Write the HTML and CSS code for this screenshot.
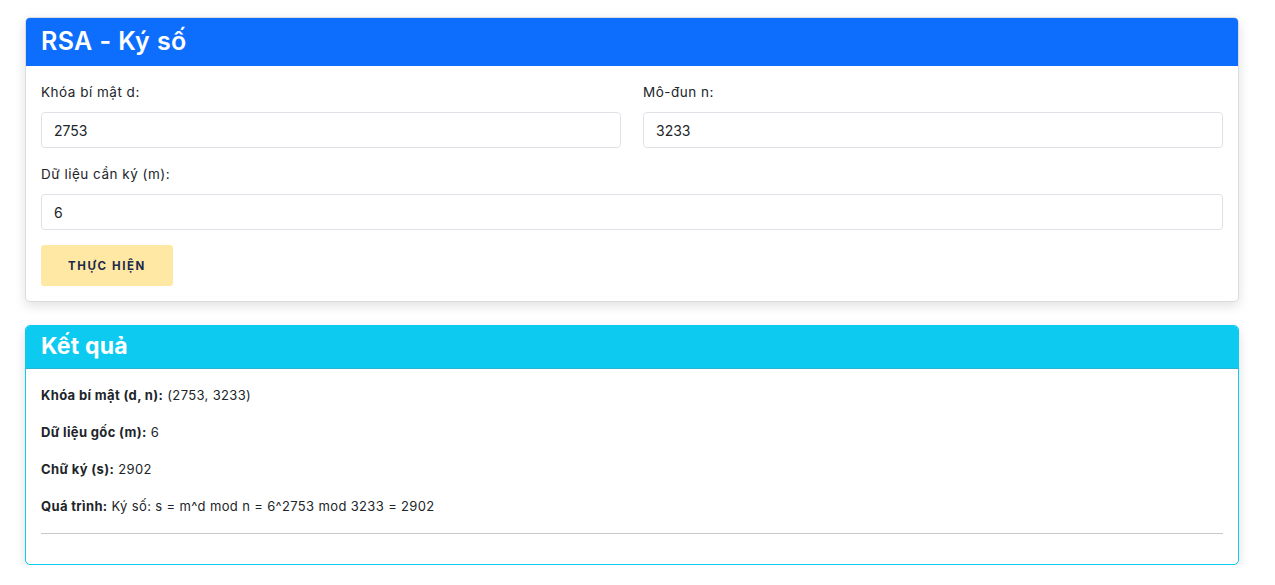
FILE: index.html
```html
<!DOCTYPE html>
<html lang="vi">
<head>
<meta charset="utf-8">
<title>RSA - Ký số</title>
<link rel="stylesheet" href="styles.css">
</head>
<body>
<main class="page">
  <section class="card card-form">
    <header class="card-header header-primary">
      <h1 class="card-title">RSA - Ký số</h1>
    </header>
    <div class="card-body">
      <div class="row">
        <div class="field">
          <label class="label">Khóa bí mật d:</label>
          <div class="input">2753</div>
        </div>
        <div class="field">
          <label class="label">Mô-đun n:</label>
          <div class="input">3233</div>
        </div>
      </div>
      <div class="field field-full">
        <label class="label">Dữ liệu cần ký (m):</label>
        <div class="input">6</div>
      </div>
      <button class="btn">THỰC HIỆN</button>
    </div>
  </section>

  <section class="card card-result">
    <header class="card-header header-info">
      <h2 class="card-title title-bold">Kết quả</h2>
    </header>
    <div class="card-body result-body">
      <p class="line"><strong>Khóa bí mật (d, n):</strong> (2753, 3233)</p>
      <p class="line"><strong>Dữ liệu gốc (m):</strong> 6</p>
      <p class="line"><strong>Chữ ký (s):</strong> 2902</p>
      <p class="line"><strong>Quá trình:</strong> Ký số: s = m^d mod n = 6^2753 mod 3233 = 2902</p>
      <hr class="divider">
    </div>
  </section>
</main>
</body>
</html>
```

FILE: styles.css
```css
* { box-sizing: border-box; }
html, body { margin: 0; padding: 0; background: #ffffff; }
body {
  font-family: "Inter", "Open Sans", "DejaVu Sans", sans-serif;
  color: #212529;
}
.page {
  width: 1214px;
  margin-left: 25px;
  padding-top: 17px;
  display: flex;
  flex-direction: column;
  gap: 23px;
}
.card {
  background: #fff;
  border-radius: 5px;
  overflow: hidden;
  box-shadow: 0 4px 12px rgba(0,0,0,0.12);
}
.card-form { border: 1px solid #d9dcdf; }
.card-result { border: 1px solid #0dcaf0; }
.card-header {
  display: flex;
  align-items: center;
  padding: 0 15px;
}
.header-primary { background: #0d6efd; height: 49px; margin: -1px -1px 0; padding-left: 16px; }
.header-info { background: #0dcaf0; height: 44px; margin-top: -1px; border-bottom: 1px solid #2bb4d1; }
.card-title {
  margin: 0;
  color: #fff;
  font-size: 25px;
  font-weight: 600;
  letter-spacing: 0.4px;
  line-height: 1;
}
.title-bold { font-size: 23px; font-weight: 700; letter-spacing: 0.2px; }
.card-body { padding: 16px 15px 15px; }
.row {
  display: grid;
  grid-template-columns: 1fr 1fr;
  gap: 22px;
  margin-bottom: 16px;
}
.field { display: flex; flex-direction: column; }
.field-full { margin-bottom: 15px; }
.label {
  font-size: 13.5px;
  letter-spacing: 0.5px;
  line-height: 20px;
  margin-bottom: 10px;
  color: #212529;
}
.input {
  height: 36px;
  border: 1px solid #dee2e6;
  border-radius: 4px;
  padding: 0 12px;
  display: flex;
  align-items: center;
  font-size: 14px;
  color: #212529;
}
.btn {
  width: 132px;
  height: 41px;
  border: none;
  border-radius: 3px;
  background: #ffe8a3;
  color: #1b2a4a;
  font-family: inherit;
  font-size: 11.5px;
  font-weight: 700;
  letter-spacing: 1.6px;
  display: block;
}
.result-body { padding: 16px 15px 30px; }
.line {
  margin: 0 0 16px;
  font-size: 13px;
  letter-spacing: 0.35px;
  line-height: 21px;
  color: #212529;
}
.line strong { font-weight: 700; }
.divider {
  border: none;
  border-top: 1px solid #c8c8c8;
  margin: 16px 0 0;
}
```
